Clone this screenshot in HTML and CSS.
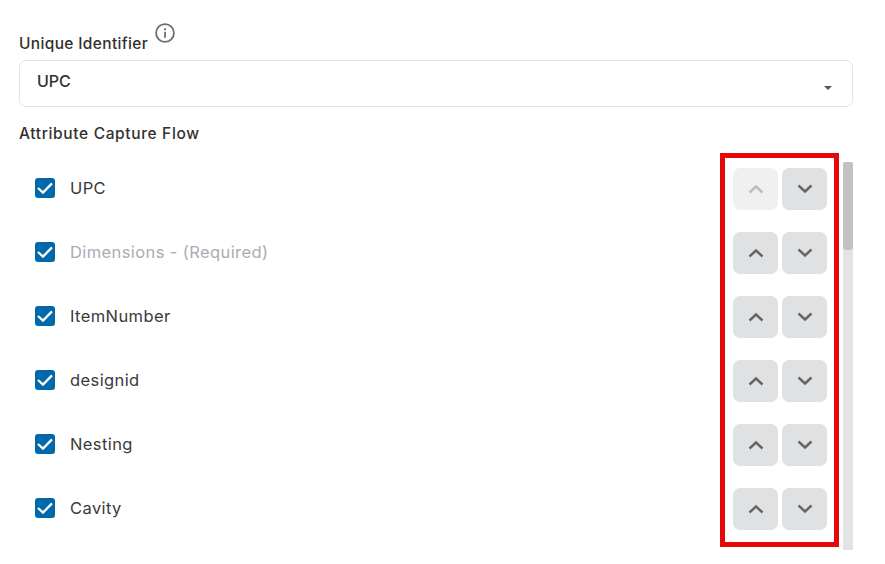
FILE: index.html
```html
<!doctype html>
<html lang="en">
<head>
    <meta charset="UTF-8">
    <title>Attribute Capture Flow</title>
    <link rel="stylesheet" href="styles.css">
</head>
<body>
<div class="panel">
    <div class="fieldLabel">
        <span>Unique Identifier</span>
        <svg class="infoIcon" width="20" height="20" viewBox="0 0 20 20">
            <circle cx="10" cy="10" r="8.9" fill="none" stroke="#6e6e6e" stroke-width="1.8"/>
            <rect x="9.1" y="8.8" width="1.8" height="6" fill="#6e6e6e"/>
            <rect x="9.1" y="5.2" width="1.8" height="2" fill="#6e6e6e"/>
        </svg>
    </div>
    <div class="selectBox">
        <span>UPC</span>
        <span class="caret"></span>
    </div>
    <div class="flowTitle">Attribute Capture Flow</div>

    <div class="flowArea">
        <div class="flowList">
            <div class="row">
                <label class="check"><svg width="20" height="20" viewBox="0 0 20 20"><path d="M3 10 8 14.6 17 5.4" fill="none" stroke="#fff" stroke-width="2.3"/></svg></label>
                <span class="rowName">UPC</span>
                <div class="arrows">
                    <button class="arrowBtn off"><svg width="16" height="10" viewBox="0 0 16 10"><path d="M1.5 8.5 8 2.5 14.5 8.5" class="chev"/></svg></button>
                    <button class="arrowBtn"><svg width="16" height="10" viewBox="0 0 16 10"><path d="M1.5 1.5 8 7.5 14.5 1.5" class="chev"/></svg></button>
                </div>
            </div>
            <div class="row">
                <label class="check"><svg width="20" height="20" viewBox="0 0 20 20"><path d="M3 10 8 14.6 17 5.4" fill="none" stroke="#fff" stroke-width="2.3"/></svg></label>
                <span class="rowName muted">Dimensions - (Required)</span>
                <div class="arrows">
                    <button class="arrowBtn"><svg width="16" height="10" viewBox="0 0 16 10"><path d="M1.5 8.5 8 2.5 14.5 8.5" class="chev"/></svg></button>
                    <button class="arrowBtn"><svg width="16" height="10" viewBox="0 0 16 10"><path d="M1.5 1.5 8 7.5 14.5 1.5" class="chev"/></svg></button>
                </div>
            </div>
            <div class="row">
                <label class="check"><svg width="20" height="20" viewBox="0 0 20 20"><path d="M3 10 8 14.6 17 5.4" fill="none" stroke="#fff" stroke-width="2.3"/></svg></label>
                <span class="rowName">ItemNumber</span>
                <div class="arrows">
                    <button class="arrowBtn"><svg width="16" height="10" viewBox="0 0 16 10"><path d="M1.5 8.5 8 2.5 14.5 8.5" class="chev"/></svg></button>
                    <button class="arrowBtn"><svg width="16" height="10" viewBox="0 0 16 10"><path d="M1.5 1.5 8 7.5 14.5 1.5" class="chev"/></svg></button>
                </div>
            </div>
            <div class="row">
                <label class="check"><svg width="20" height="20" viewBox="0 0 20 20"><path d="M3 10 8 14.6 17 5.4" fill="none" stroke="#fff" stroke-width="2.3"/></svg></label>
                <span class="rowName">designid</span>
                <div class="arrows">
                    <button class="arrowBtn"><svg width="16" height="10" viewBox="0 0 16 10"><path d="M1.5 8.5 8 2.5 14.5 8.5" class="chev"/></svg></button>
                    <button class="arrowBtn"><svg width="16" height="10" viewBox="0 0 16 10"><path d="M1.5 1.5 8 7.5 14.5 1.5" class="chev"/></svg></button>
                </div>
            </div>
            <div class="row">
                <label class="check"><svg width="20" height="20" viewBox="0 0 20 20"><path d="M3 10 8 14.6 17 5.4" fill="none" stroke="#fff" stroke-width="2.3"/></svg></label>
                <span class="rowName">Nesting</span>
                <div class="arrows">
                    <button class="arrowBtn"><svg width="16" height="10" viewBox="0 0 16 10"><path d="M1.5 8.5 8 2.5 14.5 8.5" class="chev"/></svg></button>
                    <button class="arrowBtn"><svg width="16" height="10" viewBox="0 0 16 10"><path d="M1.5 1.5 8 7.5 14.5 1.5" class="chev"/></svg></button>
                </div>
            </div>
            <div class="row">
                <label class="check"><svg width="20" height="20" viewBox="0 0 20 20"><path d="M3 10 8 14.6 17 5.4" fill="none" stroke="#fff" stroke-width="2.3"/></svg></label>
                <span class="rowName">Cavity</span>
                <div class="arrows">
                    <button class="arrowBtn"><svg width="16" height="10" viewBox="0 0 16 10"><path d="M1.5 8.5 8 2.5 14.5 8.5" class="chev"/></svg></button>
                    <button class="arrowBtn"><svg width="16" height="10" viewBox="0 0 16 10"><path d="M1.5 1.5 8 7.5 14.5 1.5" class="chev"/></svg></button>
                </div>
            </div>
        </div>
        <div class="scrollTrack"><div class="scrollThumb"></div></div>
        <div class="redBox"></div>
    </div>
</div>
</body>
</html>
```

FILE: styles.css
```css
* {
    box-sizing: border-box;
}
html, body {
    height: 100%;
    overflow: hidden;
}
body {
    margin: 0;
    background: #fff;
    color: #33302e;
    font-family: Inter, "Noto Sans", Arial, sans-serif;
}
.panel {
    width: 853px;
    padding: 22px 0 0 19px;
}
.fieldLabel {
    display: flex;
    align-items: flex-start;
    height: 38px;
    gap: 7px;
    font-size: 15.5px;
    font-weight: 500;
    letter-spacing: 0.35px;
}
.fieldLabel span {
    padding-top: 12px;
}
.infoIcon {
    display: block;
    margin-top: 1px;
}
.selectBox {
    display: flex;
    align-items: center;
    justify-content: space-between;
    height: 47px;
    padding: 0 20px 0 17px;
    border: 1px solid #e2e2e2;
    border-radius: 7px;
    font-size: 16px;
    font-weight: 500;
}
.selectBox span:first-child {
    margin-top: -6px;
}
.caret {
    width: 0;
    height: 0;
    margin-top: 9px;
    border-left: 4.5px solid transparent;
    border-right: 4.5px solid transparent;
    border-top: 4.5px solid #555;
}
.flowTitle {
    margin-top: 18px;
    height: 18px;
    line-height: 18px;
    font-size: 15.5px;
    font-weight: 500;
    letter-spacing: 0.65px;
}
.flowArea {
    position: relative;
    display: flex;
    height: 388px;
    margin-top: 19px;
}
.flowList {
    flex: 1;
    padding-top: 6px;
}
.row {
    display: flex;
    align-items: center;
    height: 42px;
    margin-bottom: 22px;
    padding-left: 16px;
}
.check {
    display: block;
    flex: none;
    width: 20px;
    height: 20px;
    margin-top: -2px;
    border-radius: 3px;
    background: #0069aa;
}
.check svg {
    display: block;
}
.rowName {
    flex: 1;
    margin: -3px 0 0 15px;
    font-size: 16.5px;
    letter-spacing: 0.4px;
    color: #3a3a3a;
}
.rowName.muted {
    color: #a9adb2;
}
.arrows {
    display: flex;
    gap: 4px;
}
.arrowBtn {
    display: flex;
    align-items: center;
    justify-content: center;
    width: 45px;
    height: 42px;
    padding: 0;
    border: 0;
    border-radius: 7px;
    background: #e0e1e3;
}
.arrowBtn.off {
    background: #f0f0f0;
}
.arrowBtn svg {
    display: block;
}
.chev {
    fill: none;
    stroke: #666;
    stroke-width: 2.4;
}
.off .chev {
    stroke: #bdbdbd;
}
.scrollTrack {
    flex: none;
    width: 10px;
    margin-left: 16px;
    background: #e3e3e3;
}
.scrollThumb {
    height: 88px;
    border-radius: 3px;
    background: #c1c1c1;
}
.redBox {
    position: absolute;
    top: -9px;
    right: 14px;
    width: 119px;
    height: 394px;
    border: 5px solid #e60808;
    pointer-events: none;
}
```
